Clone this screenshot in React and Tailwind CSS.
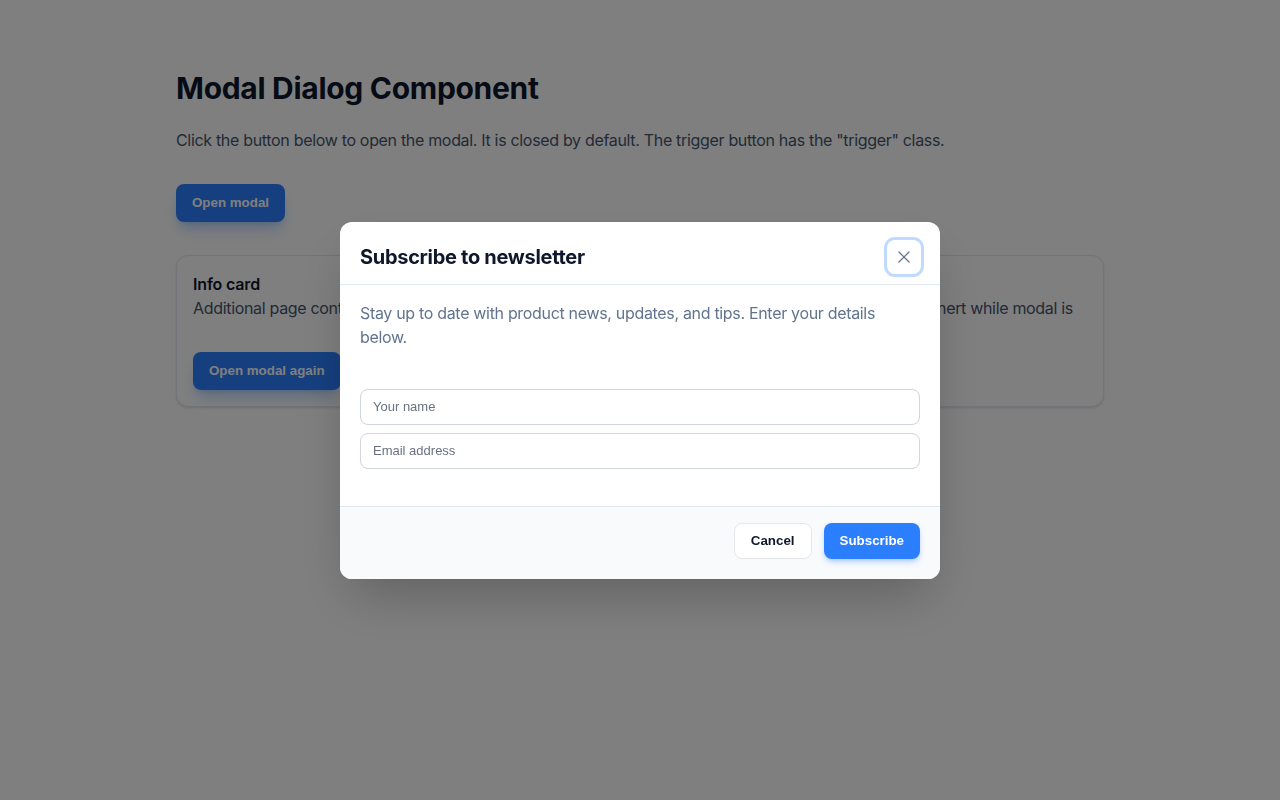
import React from "react";

export default function App() {
  const inter = { fontFamily: "Inter, 'Noto Sans', sans-serif" };
  const arial = { fontFamily: "'Liberation Sans', Arial, sans-serif" };
  return (
    <div className="min-h-screen bg-white" style={inter}>
      <main className="mx-auto max-w-[928px] pt-[70px]">
        <h1 className="text-[30px] leading-[36px] font-bold tracking-[-0.01em] text-slate-900">
          Modal Dialog Component
        </h1>
        <p className="mt-[22px] text-base leading-6 tracking-[-0.02em] text-slate-600">
          Click the button below to open the modal. It is closed by default. The trigger button has the "trigger" class.
        </p>
        <button
          className="trigger mt-8 h-[38px] rounded-lg bg-blue-500 px-4 text-[13.33px] font-bold text-white shadow-lg shadow-blue-500/30"
          style={arial}
        >
          Open modal
        </button>
        <div className="mt-[33px] rounded-xl border border-slate-200 bg-white p-4 shadow-sm">
          <h2 className="text-base leading-6 font-semibold tracking-[-0.01em] text-slate-900">Info card</h2>
          <p className="whitespace-nowrap overflow-hidden text-base leading-6 tracking-[-0.02em] text-slate-600">
            Additional page content that sits behind the dialog's overlay and should then be completely treated as inert while modal is
          </p>
          <button
            className="trigger mt-8 h-[38px] rounded-lg bg-blue-500 px-4 text-[13.33px] font-bold text-white shadow-lg shadow-blue-500/30"
            style={arial}
          >
            Open modal again
          </button>
        </div>
      </main>

      <div className="fixed inset-0 flex items-center justify-center bg-black/50">
        <div className="w-[600px] overflow-hidden rounded-xl bg-white shadow-2xl">
          <div className="flex items-center justify-between border-b border-slate-200 pl-5 pr-[19px] pt-[18px] pb-[10px]">
            <h2 className="text-[20px] leading-7 font-bold tracking-[-0.015em] text-slate-900">
              Subscribe to newsletter
            </h2>
            <button className="flex h-[34px] w-[34px] items-center justify-center rounded-lg ring-3 ring-blue-200 text-slate-500">
              <svg width="12" height="12" viewBox="0 0 12 12" fill="none" stroke="currentColor" strokeWidth="1.3" strokeLinecap="round">
                <path d="M1 1l10 10M11 1L1 11" />
              </svg>
            </button>
          </div>
          <div className="px-5 pt-4 pb-[37px]">
            <p className="text-base leading-6 tracking-[-0.02em] text-slate-500">
              Stay up to date with product news, updates, and tips. Enter your details below.
            </p>
            <form className="mt-10 flex flex-col gap-2" style={arial}>
              <input
                placeholder="Your name"
                className="h-9 w-full rounded-lg border border-gray-300 px-3 text-[13px] text-slate-900 placeholder:text-gray-500 outline-none"
              />
              <input
                placeholder="Email address"
                className="h-9 w-full rounded-lg border border-gray-300 px-3 text-[13px] text-slate-900 placeholder:text-gray-500 outline-none"
              />
            </form>
          </div>
          <div
            className="flex justify-end gap-3 border-t border-slate-200 bg-slate-50 px-5 pt-4 pb-[20px]"
            style={arial}
          >
            <button className="h-9 rounded-lg border border-gray-200 bg-white px-4 text-[13.33px] font-bold text-slate-900">
              Cancel
            </button>
            <button className="h-9 rounded-lg bg-blue-500 px-4 text-[13.33px] font-bold text-white shadow-md shadow-blue-500/30">
              Subscribe
            </button>
          </div>
        </div>
      </div>
    </div>
  );
}
